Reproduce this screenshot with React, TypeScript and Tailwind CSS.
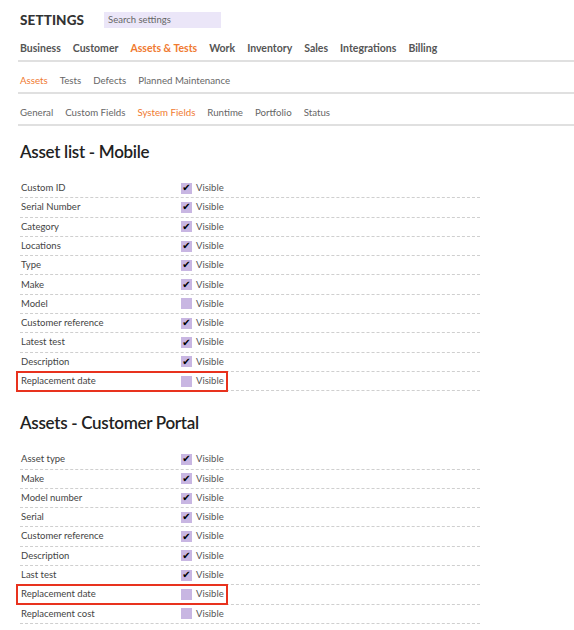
import React from "react";

const mainTabs = ["Business", "Customer", "Assets & Tests", "Work", "Inventory", "Sales", "Integrations", "Billing"];
const subTabs = ["Assets", "Tests", "Defects", "Planned Maintenance"];
const fieldTabs = ["General", "Custom Fields", "System Fields", "Runtime", "Portfolio", "Status"];

type Field = { label: string; checked: boolean; highlight?: boolean };

const mobileFields: Field[] = [
  { label: "Custom ID", checked: true },
  { label: "Serial Number", checked: true },
  { label: "Category", checked: true },
  { label: "Locations", checked: true },
  { label: "Type", checked: true },
  { label: "Make", checked: true },
  { label: "Model", checked: false },
  { label: "Customer reference", checked: true },
  { label: "Latest test", checked: true },
  { label: "Description", checked: true },
  { label: "Replacement date", checked: false, highlight: true },
];

const portalFields: Field[] = [
  { label: "Asset type", checked: true },
  { label: "Make", checked: true },
  { label: "Model number", checked: true },
  { label: "Serial", checked: true },
  { label: "Customer reference", checked: true },
  { label: "Description", checked: true },
  { label: "Last test", checked: true },
  { label: "Replacement date", checked: false, highlight: true },
  { label: "Replacement cost", checked: false },
];

function TabRow({ tabs, active, bold }: { tabs: string[]; active: string; bold?: boolean }) {
  return (
    <div className="flex h-[32px] items-end gap-[12px] border-b-2 border-[#e0e0e0] pb-[6px] pl-[2px]">
      {tabs.map((tab) => (
        <span
          key={tab}
          className={`leading-[12px] ${bold ? "text-[10.5px] font-bold" : "text-[9.7px]"} ${
            tab === active ? "text-[#f07a30]" : bold ? "text-[#555]" : "text-[#666]"
          }`}
        >
          {tab}
        </span>
      ))}
    </div>
  );
}

function FieldRow({ field }: { field: Field }) {
  return (
    <div className="relative flex h-[19.3px] w-[460px] items-center border-b border-dashed border-[#cfcfcf] text-[9.5px] text-[#444]">
      {field.highlight && (
        <div className="pointer-events-none absolute left-[-4px] top-[-1px] h-[21px] w-[212px] border-2 border-[#e8321e]" />
      )}
      <span className="w-[161px] pl-[1px]">{field.label}</span>
      <span
        className="flex h-[11px] w-[11px] items-center justify-center bg-[#c8b6e2] text-[10px] leading-none text-black"
        style={{ fontFamily: "'DejaVu Sans', sans-serif" }}
      >
        {field.checked ? "✔" : ""}
      </span>
      <span className="ml-[4px] text-[#555]">Visible</span>
    </div>
  );
}

function Section({ title, fields }: { title: string; fields: Field[] }) {
  return (
    <div>
      <h2 className="mt-[14px] mb-[15px] text-[17px] leading-[24px] font-semibold tracking-[-0.3px] text-[#222]">
        {title}
      </h2>
      <div className="flex flex-col">
        {fields.map((f) => (
          <FieldRow key={f.label} field={f} />
        ))}
      </div>
    </div>
  );
}

export default function App() {
  return (
    <div
      className="min-h-[630px] w-[574px] bg-white pl-[18px] pt-[11px]"
      style={{ fontFamily: "Lato, 'Noto Sans', sans-serif" }}
    >
      <div className="flex h-[18px] items-center gap-[20px] pl-[2px]">
        <h1 className="text-[13.5px] font-black tracking-[0.1px] text-[#333]">SETTINGS</h1>
        <div className="flex h-[16px] w-[117px] items-center bg-[#ebe6f8] px-[4px] text-[9.5px] text-[#666]">
          Search settings
        </div>
      </div>
      <div className="pt-[1px]">
        <TabRow tabs={mainTabs} active="Assets & Tests" bold />
        <TabRow tabs={subTabs} active="Assets" />
        <TabRow tabs={fieldTabs} active="System Fields" />
      </div>
      <div className="pl-[2px]">
        <Section title="Asset list - Mobile" fields={mobileFields} />
        <div className="h-[6px]" />
        <Section title="Assets - Customer Portal" fields={portalFields} />
      </div>
    </div>
  );
}
